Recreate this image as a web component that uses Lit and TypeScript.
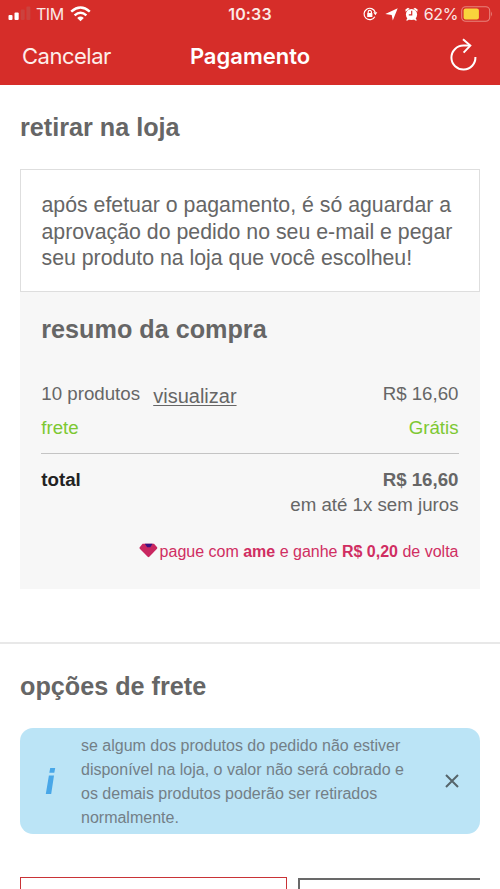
import { LitElement, html, css } from "lit";
import { customElement } from "lit/decorators.js";

@customElement("status-bar")
class StatusBar extends LitElement {
  static styles = css`
    :host { display: grid; grid-template-columns: 1fr auto 1fr; align-items: center; height: 28px; padding: 0 8px 0 8px;
      font: 400 16px/20px Inter, "Liberation Sans", sans-serif; color: #fbe9e6; }
    .side { display: flex; align-items: center; }
    .left { margin-left: -1px; }
    .right { justify-content: flex-end; }
    .carrier { margin: 0 6px 0 5px; letter-spacing: -0.5px; }
    .time { font-weight: 600; letter-spacing: 0.15px; }
    .pct { letter-spacing: -0.4px; margin: 0 3px 0 6px; }
    svg { display: block; flex: none; }
    .gap { margin-left: 7px; }
  `;
  render() {
    return html`
      <div class="side left">
        <svg width="24" height="16" viewBox="0 0 24 16">
          <rect x="1.5" y="9.1" width="4" height="5" rx="1" fill="#fff"/>
          <rect x="7.5" y="6.5" width="4.2" height="7.6" rx="1" fill="#fff"/>
          <rect x="13.7" y="3.5" width="4" height="10.6" rx="1" fill="#cb423e"/>
          <rect x="19.4" y="0.5" width="4" height="13.6" rx="1" fill="#cb423e"/>
        </svg>
        <span class="carrier">TIM</span>
        <svg width="21" height="16" viewBox="0 0 21 16" fill="none" stroke="#fff" stroke-width="2.5">
          <path d="M1.2 5.6Q10.5-2.5 19.8 5.6"/>
          <path d="M4.6 9.4Q10.5 4.2 16.4 9.4"/>
          <path d="M10.5 15.2L7.2 11.9Q10.5 9.2 13.8 11.9Z" fill="#fff" stroke="none"/>
        </svg>
      </div>
      <span class="time">10:33</span>
      <div class="side right">
        <svg width="15" height="14" viewBox="0 0 15 14" fill="none" stroke="#fff" stroke-width="1.2">
          <path d="M11.8 9.7A5.7 5.7 0 1 1 12.2 5.2"/>
          <path d="M10.3 5.2h4l-1.9 3z" fill="#fff" stroke="none"/>
          <rect x="4.2" y="6" width="5.2" height="4" rx=".5" fill="#fff" stroke="none"/>
          <path d="M5.2 6.2V5a1.6 1.6 0 0 1 3.2 0v1.2"/>
        </svg>
        <svg class="gap" width="13" height="13" viewBox="0 0 13 13"><path d="M12.7.3L7.8 12.6 6.7 6.9.3 6Z" fill="#fff"/></svg>
        <svg class="gap" width="13" height="15" viewBox="0 0 13 15">
          <circle cx="6.5" cy="7.5" r="5.6" fill="#fff"/>
          <path d="M.6 4.8L.4 2.6 3 .8l1.6.9zM12.4 4.8l.2-2.2L10 .8l-1.6.9zM2.5 11l-1.4 2.6h1.6l2-1.5zM10.5 11l1.4 2.6h-1.6l-2-1.5z" fill="#fff"/>
          <path d="M6.7 3.8v4H3.8" fill="none" stroke="#d62d29" stroke-width="1.2"/>
        </svg>
        <span class="pct">62%</span>
        <svg width="31" height="16" viewBox="0 0 31 16">
          <rect x=".7" y=".7" width="28" height="14.6" rx="4" fill="none" stroke="#e8827b" stroke-width="1.1"/>
          <rect x="2.6" y="2.6" width="15.3" height="10.8" rx="2" fill="#f9d43c"/>
          <path d="M30 5.5q1.7 2.5 0 5z" fill="#e8827b"/>
        </svg>
      </div>`;
  }
}

@customElement("nav-bar")
class NavBar extends LitElement {
  static styles = css`
    :host { display: grid; grid-template-columns: 1fr auto 1fr; align-items: center; height: 56px; padding: 0 22px;
      font: 400 22px/28px Inter, "Liberation Sans", sans-serif; color: #fdeeea; }
    .cancel { letter-spacing: -0.5px; }
    .title { font-weight: 600; letter-spacing: 0; color: #fff; }
    svg { display: block; justify-self: end; margin-top: -3px; }
  `;
  render() {
    return html`
      <span class="cancel">Cancelar</span>
      <span class="title">Pagamento</span>
      <svg width="28" height="34" viewBox="0 0 28 34" fill="none" stroke="#fff" stroke-width="2">
        <path d="M25.4 19A12 12 0 1 1 13.4 7.6H19.5"/>
        <path d="M13 1.3L20.3 7.6 13.6 14.6"/>
      </svg>`;
  }
}

@customElement("app-root")
class AppRoot extends LitElement {
  static styles = css`
    :host { display: block; height: 889px; overflow: hidden; background: #fff; color: #666;
      font-family: "Liberation Sans", Arial, sans-serif; }
    .top { background: #d62d29; height: 85px; }
    h2 { margin: 0; font-size: 25.2px; line-height: 30px; font-weight: 700; color: #666; }
    .section { padding: 0 20px; }
    .pickup { padding-top: 27px; }
    .note { box-sizing: border-box; height: 123px; margin-top: 27px; padding: 22px 20px 0 20.5px; border: 1px solid #dedede;
      font-size: 21.3px; line-height: 26.6px; white-space: nowrap; }
    .summary { box-sizing: border-box; height: 297px; padding: 22px 21.5px 0 21.3px; background: #f7f7f7; font-size: 18.7px; line-height: 24px; }
    .row { display: flex; justify-content: space-between; }
    .products { margin-top: 38px; }
    .view { margin-left: 8px; font-size: 20px; text-decoration: underline; text-decoration-thickness: 1px; text-underline-offset: 2px; display: inline-block; padding-top: 2px; }
    .items { display: flex; height: 24px; }
    .green { margin-top: 10px; color: #7dc832; }
    .total { margin-top: 13px; padding-top: 14px; border-top: 1px solid #c4c4c4; font-weight: 700; }
    .total .label { color: #222; }
    .installments { text-align: right; margin-top: 0.5px; }
    .cashback { display: flex; justify-content: flex-end; align-items: center; margin-top: 23.5px; font-size: 16px; color: #d02e62; white-space: pre; }
    .cashback svg { margin: -3px 2px 0 0; }
    .options { margin-top: 53px; padding-top: 27px; border-top: 2px solid #e8e8e8; }
    .info { box-sizing: border-box; display: grid; grid-template-columns: 61px 1fr 56px; align-items: center; height: 106px; margin-top: 27px; border-radius: 13px;
      background: #bbe4f6; color: #737f87; font-size: 16px; line-height: 24px; white-space: nowrap; }
    .text { padding-top: 1px; }
    .info svg { display: block; justify-self: center; }
    .cards { display: flex; gap: 11px; margin-top: 43px; overflow: hidden; }
    .card { box-sizing: border-box; flex: none; width: 267px; height: 60px; border: 1.5px solid #c93336; }
    .other { margin-top: 1px; border: 2px solid #696969; }
  `;
  render() {
    return html`
      <header class="top"><status-bar></status-bar><nav-bar></nav-bar></header>
      <section class="section pickup">
        <h2>retirar na loja</h2>
        <div class="note">após efetuar o pagamento, é só aguardar a<br>aprovação do pedido no seu e-mail e pegar<br>seu produto na loja que você escolheu!</div>
        <div class="summary">
          <h2>resumo da compra</h2>
          <div class="row products">
            <div class="items"><span>10 produtos</span>&nbsp;<a class="view">visualizar</a></div>
            <span>R$ 16,60</span>
          </div>
          <div class="row green"><span>frete</span><span>Grátis</span></div>
          <div class="row total"><span class="label">total</span><span>R$ 16,60</span></div>
          <div class="installments">em até 1x sem juros</div>
          <div class="cashback"><svg width="19" height="15" viewBox="0 0 19 15">
            <path d="M3.6 .8H15L18.1 4.2Q18.6 5.1 18 5.8L10.3 13.8Q9.5 14.5 8.7 13.8L.8 5.8Q.2 5.1 .7 4.2Z" fill="#c92760"/>
            <path d="M5.8 .8H13.6L11.3 4.2H8.2Z" fill="#3b1380"/>
          </svg><span>pague com <b>ame</b> e ganhe <b>R$ 0,20</b> de volta</span></div>
        </div>
      </section>
      <section class="section options">
        <h2>opções de frete</h2>
        <div class="info">
          <svg width="12" height="28" viewBox="0 0 12 28" fill="#48a7e8"><path d="M5.2 1H10.2L9.3 5.7H4.3ZM3.9 8.6H9L6.2 27H.8Z"/></svg>
          <div class="text">se algum dos produtos do pedido não estiver<br>disponível na loja, o valor não será cobrado e<br>os demais produtos poderão ser retirados<br>normalmente.</div>
          <svg width="14" height="14" viewBox="0 0 14 14" stroke="#56656b" stroke-width="2"><path d="M1 1L13 13M13 1L1 13"/></svg>
        </div>
        <div class="cards"><div class="card"></div><div class="card other"></div></div>
      </section>`;
  }
}
